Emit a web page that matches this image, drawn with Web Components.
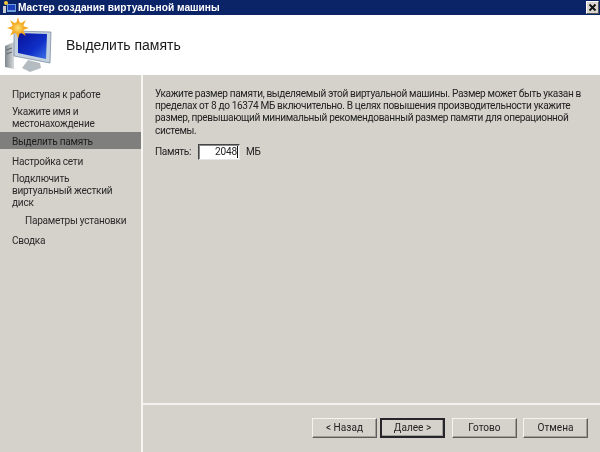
<!DOCTYPE html>
<html>
<head>
<meta charset="utf-8">
<style>
  html, body { margin: 0; padding: 0; background: #d5d2cc; }
  body { font: 10.1px/12px Roboto, "Liberation Sans", sans-serif; letter-spacing: -0.35px; color: #222; }
</style>
<script>
  function makeElement(name, css, html) {
    customElements.define(name, class extends HTMLElement {
      constructor() {
        super();
        this.attachShadow({ mode: 'open' });
        this.shadowRoot.innerHTML = '<style>' + css + '</style>' + html;
      }
    });
  }

  makeElement('wizard-window', `
    :host { display: grid; grid-template-rows: 15px 60px 1fr; width: 600px; height: 452px; overflow: hidden; background: #d5d2cc; filter: blur(0.3px); }
    #body { display: grid; grid-template-columns: 141px 2px 1fr; min-height: 0; }
    #sep { background: #f6f5f2; }
    #right { display: grid; grid-template-rows: 328px 2px 1fr; min-width: 0; }
    #line { background: #f3f2ee; }
  `, `
    <slot name="title"></slot>
    <slot name="header"></slot>
    <div id="body">
      <slot name="nav"></slot>
      <div id="sep"></div>
      <div id="right">
        <slot name="page"></slot>
        <div id="line"></div>
        <slot name="footer"></slot>
      </div>
    </div>
  `);

  makeElement('title-bar', `
    :host { display: flex; align-items: center; background: #0b2468; color: #fff; font: bold 10.2px "Liberation Sans", sans-serif; letter-spacing: 0; padding: 0 1px 0 3px; box-sizing: border-box; }
    svg { flex: none; margin-right: 1px; }
    span { flex: 1; white-space: nowrap; }
    #close { flex: none; width: 13px; height: 13px; background: #d8d5cf; border: 1px solid; border-color: #fff #555 #555 #fff; box-sizing: border-box; display: flex; align-items: center; justify-content: center; }
  `, `
    <svg width="14" height="13" viewBox="0 0 14 13">
      <rect x="4" y="3" width="9" height="8" fill="#6f9fd8"/>
      <rect x="5" y="4" width="7" height="5" fill="#1c3fc0"/>
      <rect x="0" y="5" width="3" height="7" fill="#c9ccd0"/>
      <circle cx="3" cy="2" r="2" fill="#f7c93a"/>
    </svg>
    <span><slot></slot></span>
    <div id="close">
      <svg style="margin:0" width="9" height="9" viewBox="0 0 9 9"><path d="M1.5 1.5L7.5 7.5M7.5 1.5L1.5 7.5" stroke="#111" stroke-width="1.8"/></svg>
    </div>
  `);

  makeElement('wizard-header', `
    :host { display: flex; align-items: center; background: #fff; color: #1a1a1a; font: 14px "Liberation Sans", sans-serif; letter-spacing: 0; }
    svg { flex: none; display: block; margin: 0 13px 0 3px; }
  `, `
    <svg width="50" height="56" viewBox="0 0 50 56">
      <defs>
        <linearGradient id="scr" x1="0" y1="0" x2="1" y2="1">
          <stop offset="0" stop-color="#08129a"/>
          <stop offset="0.6" stop-color="#1030c8"/>
          <stop offset="1" stop-color="#3f74e6"/>
        </linearGradient>
        <linearGradient id="case" x1="0" y1="0" x2="1" y2="0">
          <stop offset="0" stop-color="#7f868b"/>
          <stop offset="1" stop-color="#d7dadc"/>
        </linearGradient>
        <radialGradient id="sun">
          <stop offset="0" stop-color="#fde27a"/>
          <stop offset="1" stop-color="#f3a81f"/>
        </radialGradient>
      </defs>
      <path d="M2 29L11 25V52L2 50Z" fill="url(#case)"/>
      <path d="M3.5 33L9 31M3.5 37L9 35" stroke="#5d656b"/>
      <path d="M19 51L25 43L37 46L38 51L27 55Z" fill="#b4bcc2"/>
      <path d="M11 14L48 15L47 46L11 39Z" fill="#c3d0de" stroke="#6e8299" stroke-width="0.7"/>
      <path d="M15 16L44 17L43 42L15 36Z" fill="url(#scr)"/>
      <path d="M15 0L17 7L23 3L20 9L26 11L20 13L23 19L17 15L15 22L13 15L7 19L10 13L4 11L10 9L7 3L13 7Z" fill="#f5a91f"/>
      <circle cx="15" cy="11" r="6" fill="url(#sun)"/>
    </svg>
    <slot></slot>
  `);

  makeElement('step-nav', `
    :host { display: flex; flex-direction: column; padding-top: 12px; background: #d5d2cc; }
  `, `<slot></slot>`);

  makeElement('step-item', `
    :host { display: block; padding: 2px 12px 3px; color: #2b2b2b; white-space: nowrap; letter-spacing: -0.27px; }
    :host([current]) { background: #7f7f7e; color: #1d1d1d; padding: 4px 12px 1px; margin: -1px 0 5px; }
    :host([sub]) { padding-left: 25px; margin: 1px 0 0; }
    :host([last]) { margin-top: 3px; }
  `, `<slot></slot>`);

  makeElement('memory-page', `
    :host { display: block; padding: 13px 12px 0 12px; min-width: 0; }
    p { margin: 0 0 7px; white-space: nowrap; line-height: 12.2px; }
    #row { display: flex; align-items: center; height: 16px; }
    #label { width: 43px; }
    #field { width: 42px; height: 16px; box-sizing: border-box; background: #fff; border: 1px solid; border-color: #444 #e8e6e2 #e8e6e2 #444; box-shadow: inset 1px 1px 0 #8a8a88; padding: 1px 1px 0 0; display: flex; justify-content: flex-end; color: #222; letter-spacing: -0.2px; }
    #caret { width: 1px; height: 12px; background: #111; }
    #unit { margin-left: 6px; }
  `, `
    <p><slot name="text"></slot></p>
    <div id="row">
      <span id="label"><slot name="label"></slot></span>
      <div id="field"><span><slot name="value"></slot></span><span id="caret"></span></div>
      <span id="unit"><slot name="unit"></slot></span>
    </div>
  `);

  makeElement('wizard-footer', `
    :host { display: flex; padding: 13px 0 0 169px; align-items: flex-start; }
  `, `<slot></slot>`);

  makeElement('wizard-button', `
    :host { display: flex; align-items: center; justify-content: center; flex: none; width: 65px; height: 20px; box-sizing: border-box; margin-right: 3px; color: #222; letter-spacing: 0; border: 1px solid; border-color: #f4f3f0 #5e5d5a #5e5d5a #f4f3f0; background: #d5d2cc; box-shadow: inset -1px -1px 0 #a09e99; }
    :host([default]) { border: 2px solid #26262a; margin-right: 7px; }
    :host([third]) { margin-right: 6px; }
  `, `<slot></slot>`);
</script>
</head>
<body>
  <wizard-window>
    <title-bar slot="title">Мастер создания виртуальной машины</title-bar>
    <wizard-header slot="header">Выделить память</wizard-header>
    <step-nav slot="nav">
      <step-item>Приступая к работе</step-item>
      <step-item>Укажите имя и<br>местонахождение</step-item>
      <step-item current>Выделить память</step-item>
      <step-item>Настройка сети</step-item>
      <step-item>Подключить<br>виртуальный жесткий<br>диск</step-item>
      <step-item sub>Параметры установки</step-item>
      <step-item last>Сводка</step-item>
    </step-nav>
    <memory-page slot="page">
      <span slot="text">Укажите размер памяти, выделяемый этой виртуальной машины. Размер может быть указан в<br>пределах от 8 до 16374 МБ включительно. В целях повышения производительности укажите<br>размер, превышающий минимальный рекомендованный размер памяти для операционной<br>системы.</span>
      <span slot="label">Память:</span>
      <span slot="value">2048</span>
      <span slot="unit">МБ</span>
    </memory-page>
    <wizard-footer slot="footer">
      <wizard-button>&lt; Назад</wizard-button>
      <wizard-button default>Далее &gt;</wizard-button>
      <wizard-button third>Готово</wizard-button>
      <wizard-button>Отмена</wizard-button>
    </wizard-footer>
  </wizard-window>
</body>
</html>
